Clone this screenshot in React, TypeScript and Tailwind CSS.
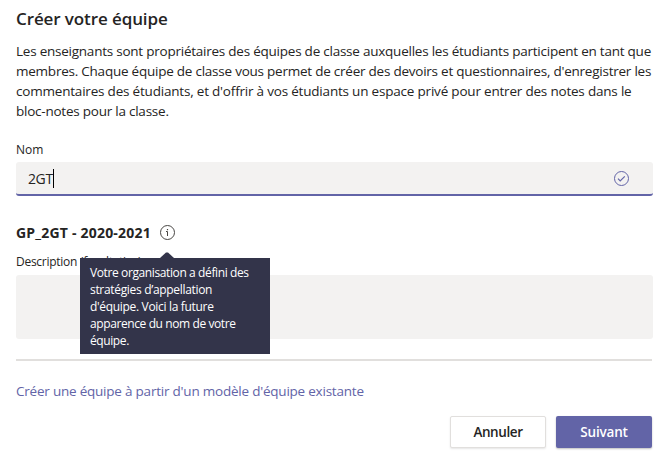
import { useState } from "react";

function InfoIcon() {
  return (
    <svg width="16" height="16" viewBox="0 0 16 16" fill="none" stroke="#484644">
      <circle cx="7.5" cy="7.5" r="7" />
      <path d="M7.5 6.5V11M6 6.5h1.5" />
      <path d="M7.5 4v1.2" strokeWidth="1.2" />
    </svg>
  );
}

function CheckCircleIcon() {
  return (
    <svg width="16" height="16" viewBox="0 0 16 16" fill="none" stroke="#6264a7">
      <circle cx="8.5" cy="8.5" r="7" />
      <path d="M5 8.7l2.2 2.2 4.6-4.6" strokeWidth="1.2" />
    </svg>
  );
}

function PolicyTooltip() {
  return (
    <div
      role="tooltip"
      className="absolute left-[-80px] top-[33px] z-10 h-24 w-[190px] bg-[#33344a] pl-2.5 pt-[6px] text-[12px] leading-[17px] tracking-[-0.32px] text-white"
    >
      <svg className="absolute -top-[6px] left-[80px]" width="14" height="6" viewBox="0 0 14 6">
        <path d="M0 6L6 0.5h2L14 6z" fill="#33344a" />
      </svg>
      <p className="whitespace-nowrap">
        <span className="tracking-[-0.39px]">Votre organisation a défini des</span>
        <br />
        <span>stratégies d’appellation</span>
        <br />
        <span>d'équipe. Voici la future</span>
        <br />
        <span className="tracking-[-0.4px]">apparence du nom de votre</span>
        <br />
        <span className="tracking-[-0.4px]">équipe.</span>
      </p>
    </div>
  );
}

export default function App() {
  const [description, setDescription] = useState("");

  return (
    <main className="h-[465px] w-[666px] overflow-hidden bg-white pl-4 pr-[13px] font-['Open_Sans','Noto_Sans',sans-serif] text-[#252423]">
      <h1 className="pt-[7px] text-[17px] font-semibold leading-6 tracking-[-0.1px]">Créer votre équipe</h1>

      <p className="mt-[10px] whitespace-nowrap text-[13.5px] leading-5 tracking-[-0.235px]">
        <span>Les enseignants sont propriétaires des équipes de classe auxquelles les étudiants participent en tant que</span>
        <br />
        <span>membres. Chaque équipe de classe vous permet de créer des devoirs et questionnaires, d'enregistrer les</span>
        <br />
        <span className="tracking-[-0.2px]">
          commentaires des étudiants, et d'offrir à vos étudiants un espace privé pour entrer des notes dans le
        </span>
        <br />
        <span>bloc-notes pour la classe.</span>
      </p>

      <div className="mt-[21px] text-[12px] leading-4">Nom</div>
      <div className="mt-1 flex h-[34px] items-center rounded-[3px] border-b-2 border-[#6264a7] bg-[#f3f2f1] pl-3 pr-6">
        <span className="pt-px text-[14px] leading-5 tracking-[-0.4px]">2GT</span>
        <span className="h-[19px] w-px bg-black" />
        <span className="ml-auto">
          <CheckCircleIcon />
        </span>
      </div>

      <div className="mt-[27px] flex h-5 items-center">
        <strong className="text-[14px] font-bold leading-5 tracking-[0.2px]">GP_2GT - 2020-2021</strong>
        <div className="relative ml-auto mr-[477px]">
          <InfoIcon />
          <PolicyTooltip />
        </div>
      </div>

      <label htmlFor="description" className="mt-[11px] block text-[12px] leading-4 tracking-[-0.27px]">
        Description (facultative)
      </label>
      <textarea
        id="description"
        value={description}
        onChange={(e) => setDescription(e.target.value)}
        className="mt-[5px] block h-16 w-full resize-none rounded-[3px] bg-[#f3f2f1] p-3 text-sm outline-none"
      />

      <hr className="mr-px mt-5 border-t-2 border-[#e1dfdd]" />

      <a href="#" className="mt-5 block w-fit whitespace-nowrap text-[13.5px] leading-5 tracking-[-0.22px] text-[#6264a7]">
        Créer une équipe à partir d'un modèle d'équipe existante
      </a>

      <div className="mr-px mt-[15px] flex justify-end gap-2.5 text-[13.5px] font-semibold">
        <button className="h-8 w-24 rounded-[2px] border border-[#e1dfdd] bg-white tracking-[-0.4px] shadow-[0_1px_2px_rgba(0,0,0,0.1)]">
          Annuler
        </button>
        <button className="h-8 w-24 rounded-[2px] bg-[#6264a7] tracking-[-0.2px] text-white shadow-[0_1px_2px_rgba(0,0,0,0.25)]">
          Suivant
        </button>
      </div>
    </main>
  );
}
